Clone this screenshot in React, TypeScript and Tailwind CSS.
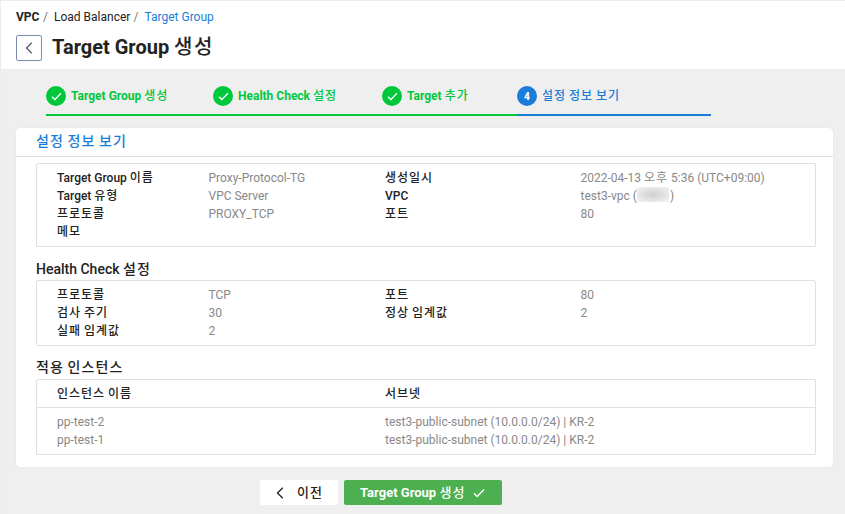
import React from "react";

const HANGUL = /([\uac00-\ud7a3]+)/;

function T({ children, weight = "font-medium" }: { children: string; weight?: string }) {
  return (
    <span>
      {children.split(HANGUL).map((part, i) =>
        HANGUL.test(part) ? (
          <span key={i} className={`tracking-[0.08em] ${weight}`}>
            {part}
          </span>
        ) : (
          part
        ),
      )}
    </span>
  );
}

function Chevron({ className }: { className: string }) {
  return (
    <svg viewBox="0 0 8 12" fill="none" strokeWidth="1.3" className={className}>
      <path d="M6.8 0.8 1.5 6l5.3 5.2" />
    </svg>
  );
}

function Check({ className }: { className: string }) {
  return (
    <svg viewBox="0 0 12 10" fill="none" stroke="currentColor" strokeWidth="1.4" className={className}>
      <path d="M1 5.2 4.2 8.4 11 1.4" />
    </svg>
  );
}

function Step({ label, width, number }: { label: string; width: string; number?: number }) {
  const color = number ? "border-[#1a7dd7] text-[#1a7dd7]" : "border-[#00c73c] text-[#00c73c]";
  return (
    <li className={`flex h-[30px] items-start border-b-2 ${color} ${width}`}>
      <span
        className={`flex size-5 shrink-0 items-center justify-center rounded-full text-[10px] font-black text-white ${number ? "bg-[#1a7dd7]" : "bg-[#00c73c]"}`}
      >
        {number ?? <Check className="h-[9px] w-[11px]" />}
      </span>
      <span className="ml-[5px] text-[12px] leading-5 font-bold whitespace-nowrap">
        <T>{label}</T>
      </span>
    </li>
  );
}

function Label({ children }: { children: string }) {
  return (
    <dt className="font-medium text-[#222]">
      <T>{children}</T>
    </dt>
  );
}

function Details({ rows, className }: { rows: [string, React.ReactNode, string?, React.ReactNode?][]; className: string }) {
  return (
    <dl
      className={`grid auto-rows-[18px] grid-cols-[151.5px_176.5px_195.5px_1fr] rounded-xs border border-[#e0e0e0] pl-5 text-[12px] leading-[18px] whitespace-nowrap text-[#888] ${className}`}
    >
      {rows.map(([a, b, c, d]) => (
        <React.Fragment key={a}>
          <Label>{a}</Label>
          <dd>{b}</dd>
          {c ? <Label>{c}</Label> : <dt />}
          <dd>{d}</dd>
        </React.Fragment>
      ))}
    </dl>
  );
}

const INSTANCES = ["pp-test-2", "pp-test-1"];

export default function App() {
  return (
    <div className="h-[514px] w-[845px] overflow-hidden border-t border-l border-[#ededed] bg-[#efefef] font-[Roboto,'Noto_Sans_CJK_KR',sans-serif] text-[#222]">
      <header className="h-[68px] bg-white pl-[15px]">
        <nav className="flex pt-[7px] text-[12px] leading-[18px]">
          <b className="w-[27px] font-bold">VPC</b>
          <span className="w-[11px] text-[#777]">/</span>
          <span className="w-[79.5px]">Load Balancer</span>
          <span className="w-[11px] text-[#777]">/</span>
          <a className="text-[#1a7dd7]">Target Group</a>
        </nav>
        <div className="mt-[7px] flex items-center">
          <button className="mt-[2px] flex size-[26px] items-center justify-center rounded-xs border border-[#7890ad]">
            <Chevron className="h-3 w-2 stroke-[#4d5d72]" />
          </button>
          <h1 className="ml-[10px] text-[20px] leading-[26px] font-bold">
            <T>Target Group 생성</T>
          </h1>
        </div>
      </header>
      <ol className="mt-[17px] ml-[45px] flex">
        <Step label="Target Group 생성" width="w-[167px]" />
        <Step label="Health Check 설정" width="w-[169px]" />
        <Step label="Target 추가" width="w-[135px]" />
        <Step label="설정 정보 보기" width="w-[194px]" number={4} />
      </ol>
      <main className="mt-3 ml-[15px] h-[339px] w-[817px] rounded-sm bg-white shadow-[0_0_1px_#ccc]">
        <h2 className="h-[29px] border-b border-[#e0e0e0] pl-5 text-[14px] leading-[27px] text-[#1a7dd7]">
          <T>설정 정보 보기</T>
        </h2>
        <div className="pt-[6px] pr-[17px] pl-5">
          <Details
            className="h-[84px] pt-[5px]"
            rows={[
              [
                "Target Group 이름",
                "Proxy-Protocol-TG",
                "생성일시",
                <T key="date" weight="font-normal">2022-04-13 오후 5:36 (UTC+09:00)</T>,
              ],
              [
                "Target 유형",
                "VPC Server",
                "VPC",
                <span key="vpc" className="flex">
                  test3-vpc (<span className="mr-px h-[15px] w-8 bg-radial from-[#cfcfcf] to-[#f5f5f5]" />)
                </span>,
              ],
              ["프로토콜", "PROXY_TCP", "포트", "80"],
              ["메모", ""],
            ]}
          />
          <h3 className="mt-3 h-[21px] text-[14px] leading-5 font-medium">
            <T>Health Check 설정</T>
          </h3>
          <Details
            className="h-[66px] pt-[5px]"
            rows={[
              ["프로토콜", "TCP", "포트", "80"],
              ["검사 주기", "30", "정상 임계값", "2"],
              ["실패 임계값", "2"],
            ]}
          />
          <h3 className="mt-3 h-[21px] text-[14px] leading-[19px] font-medium">
            <T>적용 인스턴스</T>
          </h3>
          <section className="h-[76px] rounded-xs border border-[#e0e0e0] text-[12px] leading-[18px] text-[#888]">
            <div className="grid h-[28px] grid-cols-[328px_1fr] border-b border-[#e0e0e0] pl-5 leading-[29px] font-medium text-[#222]">
              <T>인스턴스 이름</T>
              <T>서브넷</T>
            </div>
            <div className="pt-[5px] pl-5">
              {INSTANCES.map((name) => (
                <div key={name} className="grid grid-cols-[328px_1fr]">
                  <span>{name}</span>
                  <span>test3-public-subnet (10.0.0.0/24) | KR-2</span>
                </div>
              ))}
            </div>
          </section>
        </div>
      </main>
      <footer className="mt-[13px] ml-[259px] flex gap-1.5">
        <button className="flex h-[25px] w-[78px] items-center rounded-xs bg-white pl-4 text-[13px]">
          <Chevron className="h-3 w-2 stroke-[#222]" />
          <span className="ml-[13px]"><T>이전</T></span>
        </button>
        <button className="flex h-[25px] w-[158px] items-center rounded-xs bg-[#4caf50] pl-4 text-[13px] font-bold whitespace-nowrap text-white">
          <T>Target Group 생성</T>
          <Check className="ml-2 h-[10px] w-3" />
        </button>
      </footer>
    </div>
  );
}
